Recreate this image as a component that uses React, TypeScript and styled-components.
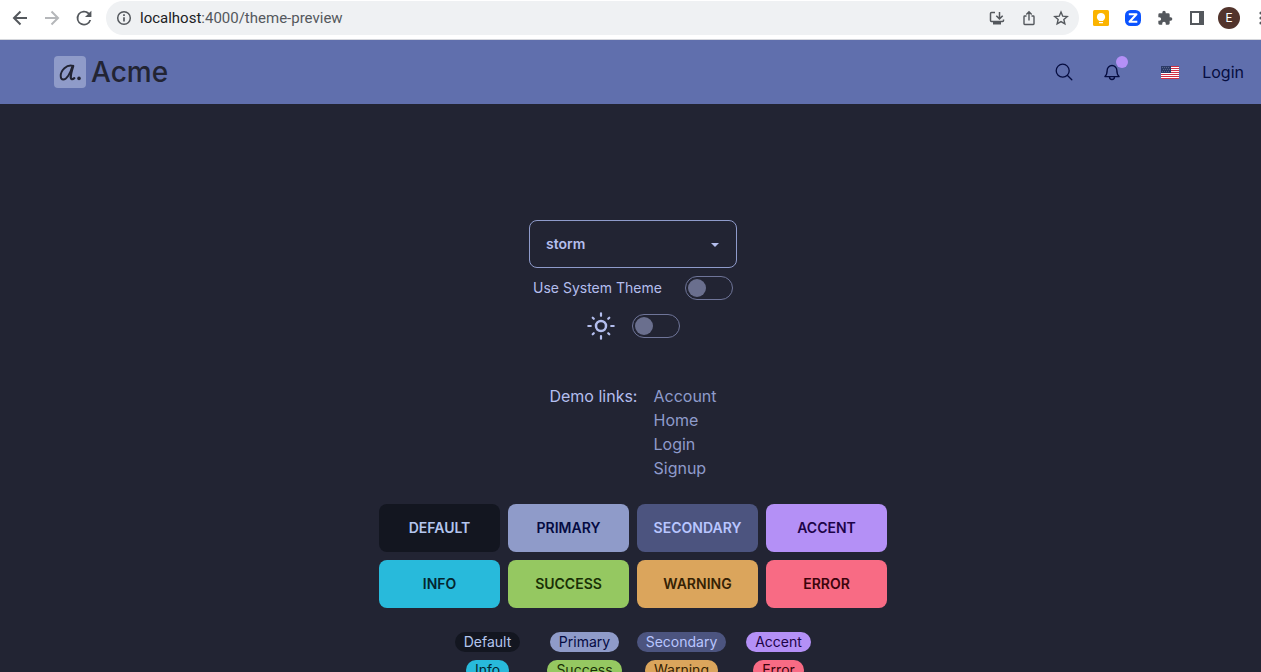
import React from "react";
import styled, { createGlobalStyle } from "styled-components";

const GlobalStyle = createGlobalStyle`
  *, *::before, *::after { box-sizing: border-box; }
  body {
    margin: 0;
    background: #222433;
    color: #b4beee;
    font-family: Inter, "Liberation Sans", sans-serif;
    font-size: 16px;
    line-height: 24px;
  }
  button, input, select { font: inherit; }
  svg { display: block; flex: none; }
`;

const Window = styled.div`
  display: flex;
  flex-direction: column;
  height: 100vh;
  overflow: hidden;
`;

const Toolbar = styled.div`
  display: flex;
  flex: none;
  align-items: center;
  height: 40px;
  padding: 0 0 4px 4px;
  background: #ffffff;
  border-bottom: 1px solid #d5d7dc;
  overflow: hidden;
`;

const ToolButton = styled.button<{ $color?: string }>`
  display: flex;
  flex: none;
  align-items: center;
  justify-content: center;
  width: 32px;
  height: 32px;
  padding: 0;
  border: 0;
  background: none;
  color: ${(p) => p.$color ?? "#54585d"};
`;

const OverflowMenu = styled(ToolButton)`
  width: 18px;
  margin-right: -2px;
  justify-content: flex-end;
`;

const AddressBar = styled.div`
  display: flex;
  flex: 1;
  align-items: center;
  min-width: 0;
  height: 34px;
  margin: 0 6px;
  padding: 0 2px 0 10px;
  border-radius: 17px;
  background: #eff1f3;
  color: #54585d;
`;

const Address = styled.div`
  flex: 1;
  margin-left: 8px;
  font-family: Roboto, sans-serif;
  font-size: 15px;
  line-height: 20px;
  color: #54585d;
`;

const Host = styled.span`
  color: #202124;
`;

const Profile = styled.span`
  display: flex;
  align-items: center;
  justify-content: center;
  width: 22px;
  height: 22px;
  border-radius: 50%;
  background: #52342c;
  color: #ffffff;
  font-family: Roboto, sans-serif;
  font-size: 12px;
`;

const Navbar = styled.header`
  display: flex;
  flex: none;
  align-items: center;
  justify-content: space-between;
  height: 64px;
  padding: 0 17px 0 54px;
  background: #606fad;
  color: #060d40;
`;

const Brand = styled.a`
  display: flex;
  align-items: center;
  gap: 5px;
  color: #222433;
  font-size: 28px;
  font-weight: 500;
  line-height: 32px;
  text-decoration: none;
`;

const NavActions = styled.nav`
  display: flex;
  align-items: center;
`;

const NavButton = styled.button`
  position: relative;
  display: flex;
  align-items: center;
  justify-content: center;
  width: 48px;
  height: 48px;
  padding: 0;
  border: 0;
  background: none;
  color: inherit;
`;

const LanguageButton = styled(NavButton)`
  margin-left: 10px;
`;

const Dot = styled.span`
  position: absolute;
  top: 8px;
  right: 8px;
  width: 12px;
  height: 12px;
  border-radius: 50%;
  background: #b490f6;
`;

const LoginLink = styled.a`
  margin-left: 8px;
  color: inherit;
  text-decoration: none;
`;

const Main = styled.main`
  display: flex;
  flex: 1;
  flex-direction: column;
  align-items: center;
  min-height: 0;
  padding: 116px 0 0 5px;
  overflow: hidden;
`;

const SelectBox = styled.div`
  position: relative;
  flex: none;
  width: 208px;
`;

const ThemeSelect = styled.select`
  display: block;
  width: 100%;
  height: 48px;
  padding: 0 40px 0 16px;
  appearance: none;
  border: 1px solid #8f9bcb;
  border-radius: 8px;
  background: transparent;
  color: #b4beee;
  font-size: 14px;
  font-weight: 600;
  line-height: 20px;
`;

const Caret = styled.svg`
  position: absolute;
  top: 23px;
  right: 18px;
  pointer-events: none;
`;

const SystemRow = styled.label`
  display: flex;
  flex: none;
  align-items: center;
  justify-content: space-between;
  width: 200px;
  height: 24px;
  margin-top: 8px;
  font-size: 14px;
  line-height: 20px;
`;

const ModeRow = styled.label`
  display: flex;
  flex: none;
  align-items: center;
  gap: 16px;
  height: 32px;
  margin-top: 10px;
`;

const Toggle = styled.input`
  display: flex;
  flex: none;
  align-items: center;
  width: 48px;
  height: 24px;
  margin: 0;
  padding: 0 2px;
  appearance: none;
  border: 1px solid #6f7599;
  border-radius: 12px;

  &::before {
    content: "";
    width: 18px;
    height: 18px;
    border-radius: 50%;
    background: #6a6f8e;
  }

  &:checked {
    justify-content: flex-end;
  }
`;

const DemoLinks = styled.section`
  display: flex;
  flex: none;
  gap: 16px;
  margin-top: 42px;
`;

const LinkList = styled.div`
  display: flex;
  flex-direction: column;
`;

const DemoLink = styled.a`
  color: #8f9bcb;
  text-decoration: none;
`;

const ButtonGrid = styled.div`
  display: grid;
  flex: none;
  grid-template-columns: repeat(4, 121px);
  gap: 8px;
  margin-top: 24px;
`;

interface Swatch {
  $bg: string;
  $fg: string;
}

const ThemeButton = styled.button<Swatch>`
  height: 48px;
  padding: 0;
  border: 0;
  border-radius: 8px;
  background: ${(p) => p.$bg};
  color: ${(p) => p.$fg};
  font-size: 14px;
  font-weight: 600;
  line-height: 20px;
  text-transform: uppercase;
`;

const BadgeGrid = styled.div`
  display: grid;
  flex: none;
  grid-template-columns: repeat(4, 89px);
  gap: 8px;
  justify-items: center;
  margin-top: 24px;
`;

const Badge = styled.span<Swatch>`
  height: 20px;
  padding: 0 9px;
  border-radius: 10px;
  background: ${(p) => p.$bg};
  color: ${(p) => p.$fg};
  font-size: 14px;
  line-height: 20px;
  white-space: nowrap;
`;

const swatches = [
  { name: "Default", bg: "#131620", fg: "#b4c6ef" },
  { name: "Primary", bg: "#8f9bc9", fg: "#050b42" },
  { name: "Secondary", bg: "#4c547f", fg: "#b9c6ff" },
  { name: "Accent", bg: "#b490f6", fg: "#1d0348" },
  { name: "Info", bg: "#28badb", fg: "#04262f" },
  { name: "Success", bg: "#95c861", fg: "#193005" },
  { name: "Warning", bg: "#dba55c", fg: "#352204" },
  { name: "Error", bg: "#f86b84", fg: "#3c040c" },
];

const links = ["Account", "Home", "Login", "Signup"];

const flagRows = [0, 1, 2, 3, 4, 5, 6];

function ArrowIcon({ back }: { back?: boolean }) {
  return (
    <svg width="16" height="16" viewBox="0 0 16 16" fill="none" stroke="currentColor" strokeWidth="2">
      <path d={back ? "M15 8H2.5M8.5 1.5 2 8l6.500 6.500" : "M1 8h12.500M7.500 1.500 14 8l-6.500 6.500"} />
    </svg>
  );
}

function ReloadIcon() {
  return (
    <svg width="24" height="24" viewBox="0 0 24 24" fill="currentColor">
      <path d="M17.650 6.350A8 8 0 1 0 19.730 14h-2.080A6 6 0 1 1 12 6c1.660 0 3.140.690 4.220 1.780L13 11h7V4z" transform="translate(1 1) scale(.92)" />
    </svg>
  );
}

function InfoIcon() {
  return (
    <svg width="16" height="16" viewBox="0 0 16 16" fill="none" stroke="currentColor" strokeWidth="1.500">
      <circle cx="8" cy="8" r="6.300" />
      <path d="M8 7.200v4.300M8 4.300v1.700" strokeWidth="1.700" />
    </svg>
  );
}

function InstallIcon() {
  return (
    <svg width="16" height="16" viewBox="0 0 16 16" fill="none" stroke="currentColor" strokeWidth="1.500">
      <path d="M6 2.500H2.500Q1.500 2.500 1.500 3.500v7q0 1 1 1h11q1 0 1-1V9.500M10.500 2v6.500M7.300 5.700l3.200 3.200 3.200-3.200" />
      <path d="M4 12h8v2.500H4z" fill="currentColor" stroke="none" />
    </svg>
  );
}

function ShareIcon() {
  return (
    <svg width="16" height="16" viewBox="0 0 16 16" fill="none" stroke="currentColor" strokeWidth="1.400">
      <path d="M5.500 6H3.700Q3 6 3 6.700v7.100q0 .7.700.7h8.600q.7 0 .7-.7V6.700q0-.7-.7-.7h-1.800M8 10.500V2.200M5.300 4.500 8 1.800l2.700 2.700" />
    </svg>
  );
}

function StarIcon() {
  return (
    <svg width="16" height="16" viewBox="0 0 16 16" fill="none" stroke="currentColor" strokeWidth="1.400">
      <path d="m8 2 1.750 4.150 4.500.4-3.400 2.950 1 4.400L8 11.550 4.150 13.900l1-4.400-3.400-2.950 4.500-.4z" />
    </svg>
  );
}

function KeepIcon() {
  return (
    <svg width="16" height="16" viewBox="0 0 16 16">
      <rect width="16" height="16" rx="1.500" fill="#fbb400" />
      <path d="M8 3a4 4 0 0 0-2.200 7.400V11h4.400v-.600A4 4 0 0 0 8 3zM6 12h4v1.200H6z" fill="#fff" />
    </svg>
  );
}

function ZIcon() {
  return (
    <svg width="16" height="16" viewBox="0 0 16 16">
      <rect width="16" height="16" rx="5.500" fill="#0b53ff" />
      <path d="M3.800 4.300h7.700L4.500 11.800h7.800" fill="none" stroke="#fff" strokeWidth="2" strokeLinejoin="round" />
    </svg>
  );
}

function PuzzleIcon() {
  return (
    <svg width="16" height="16" viewBox="0 0 24 24" fill="currentColor">
      <path d="M20.500 11H19V7a2 2 0 0 0-2-2h-4V3.500a2.500 2.500 0 0 0-5 0V5H4a2 2 0 0 0-1.990 2v3.800H3.500a2.700 2.700 0 0 1 0 5.400H2V20a2 2 0 0 0 2 2h3.800v-1.500a2.700 2.700 0 0 1 5.400 0V22H17a2 2 0 0 0 2-2v-4h1.500a2.500 2.500 0 0 0 0-5z" />
    </svg>
  );
}

function PanelIcon() {
  return (
    <svg width="14" height="14" viewBox="0 0 14 14" fill="currentColor">
      <path d="M0 0h14v14H0zM2 2v10h7V2z" fillRule="evenodd" />
    </svg>
  );
}

function MenuIcon() {
  return (
    <svg width="4" height="16" viewBox="0 0 4 16" fill="currentColor">
      <circle cx="2" cy="3" r="1.600" />
      <circle cx="2" cy="8" r="1.600" />
      <circle cx="2" cy="13" r="1.600" />
    </svg>
  );
}

function LogoMark() {
  return (
    <svg width="32" height="32" viewBox="0 0 32 32" fill="none" stroke="#222433" strokeLinecap="round" strokeLinejoin="round">
      <rect width="32" height="32" rx="4" fill="#8f9bc9" stroke="none" />
      <path d="M18.800 9.800C12.500 8.300 6.700 14.500 6.700 20c0 2.300 1 3.500 2.600 3.500 3.300 0 7-5.800 8.900-12.800" strokeWidth="1.900" />
      <path d="M19.200 10c-1.400 4.500-2.600 8.500-2.500 11.200.1 2 1.700 2.600 3.600 1" strokeWidth="2.300" />
      <circle cx="25" cy="22.400" r="1.800" fill="#222433" stroke="none" />
    </svg>
  );
}

function SearchIcon() {
  return (
    <svg width="20" height="20" viewBox="0 0 20 20" fill="none" stroke="currentColor" strokeWidth="1.300" strokeLinecap="round">
      <circle cx="8.700" cy="8.700" r="6.500" />
      <path d="m13.500 13.500 4.300 4.300" />
    </svg>
  );
}

function BellIcon() {
  return (
    <svg width="20" height="20" viewBox="0 0 24 24" fill="none" stroke="currentColor" strokeWidth="1.600" strokeLinecap="round" strokeLinejoin="round">
      <path d="M3.500 17.500c2-1.700 2.700-3.500 2.700-7.500a5.800 5.800 0 0 1 11.600 0c0 4 .7 5.800 2.700 7.500zM9 18a3 3 0 0 0 6 0" />
    </svg>
  );
}

function FlagIcon() {
  return (
    <svg width="18" height="13" viewBox="0 0 18 13">
      <rect width="18" height="13" fill="#fff" />
      {flagRows.map((row) => (
        <rect key={row} y={row * 2} width="18" height="1" fill="#d02f44" />
      ))}
      <rect width="10" height="7" fill="#2b3a67" />
      <path d="M1 1.500h8M2 3.500h7M1 5.500h8" stroke="#6d7896" strokeWidth=".7" strokeDasharray="1 1" />
    </svg>
  );
}

function SunIcon() {
  return (
    <svg width="30" height="30" viewBox="0 0 30 30" fill="none" stroke="#b4beee" strokeWidth="2.200" strokeLinecap="round">
      <circle cx="15" cy="15" r="5" strokeWidth="2.500" />
      <path d="M15 2.300v2.500M15 25.200v2.500M2.300 15h2.500M25.200 15h2.500M6.700 6.700l1.100 1.100M22.200 22.200l1.100 1.100M6.700 23.300l1.100-1.100M22.200 7.800l1.100-1.100" />
    </svg>
  );
}

export default function App() {
  return (
    <Window>
      <GlobalStyle />
      <Toolbar>
        <ToolButton aria-label="Back"><ArrowIcon back /></ToolButton>
        <ToolButton aria-label="Forward" $color="#b5b7ba"><ArrowIcon /></ToolButton>
        <ToolButton aria-label="Reload"><ReloadIcon /></ToolButton>
        <AddressBar>
          <InfoIcon />
          <Address><Host>localhost</Host>:4000/theme-preview</Address>
          <ToolButton aria-label="Install"><InstallIcon /></ToolButton>
          <ToolButton aria-label="Share"><ShareIcon /></ToolButton>
          <ToolButton aria-label="Bookmark"><StarIcon /></ToolButton>
        </AddressBar>
        <ToolButton aria-label="Notes"><KeepIcon /></ToolButton>
        <ToolButton aria-label="Extension"><ZIcon /></ToolButton>
        <ToolButton aria-label="Extensions"><PuzzleIcon /></ToolButton>
        <ToolButton aria-label="Side panel"><PanelIcon /></ToolButton>
        <ToolButton aria-label="Profile"><Profile>E</Profile></ToolButton>
        <OverflowMenu aria-label="Menu"><MenuIcon /></OverflowMenu>
      </Toolbar>
      <Navbar>
        <Brand href="#"><LogoMark />Acme</Brand>
        <NavActions>
          <NavButton aria-label="Search"><SearchIcon /></NavButton>
          <NavButton aria-label="Notifications"><BellIcon /><Dot /></NavButton>
          <LanguageButton aria-label="Language"><FlagIcon /></LanguageButton>
          <LoginLink href="#login">Login</LoginLink>
        </NavActions>
      </Navbar>
      <Main>
        <SelectBox>
          <ThemeSelect aria-label="Theme" defaultValue="storm">
            <option value="storm">storm</option>
          </ThemeSelect>
          <Caret width="8" height="4" viewBox="0 0 8 4" fill="#b4beee"><path d="M0 0h8L4 4z" /></Caret>
        </SelectBox>
        <SystemRow>
          Use System Theme
          <Toggle type="checkbox" />
        </SystemRow>
        <ModeRow>
          <SunIcon />
          <Toggle type="checkbox" aria-label="Dark mode" />
        </ModeRow>
        <DemoLinks>
          <span>Demo links:</span>
          <LinkList>
            {links.map((name) => (
              <DemoLink key={name} href={`#${name.toLowerCase()}`}>{name}</DemoLink>
            ))}
          </LinkList>
        </DemoLinks>
        <ButtonGrid>
          {swatches.map((s) => (
            <ThemeButton key={s.name} $bg={s.bg} $fg={s.fg}>{s.name}</ThemeButton>
          ))}
        </ButtonGrid>
        <BadgeGrid>
          {swatches.map((s) => (
            <Badge key={s.name} $bg={s.bg} $fg={s.fg}>{s.name}</Badge>
          ))}
        </BadgeGrid>
      </Main>
    </Window>
  );
}
